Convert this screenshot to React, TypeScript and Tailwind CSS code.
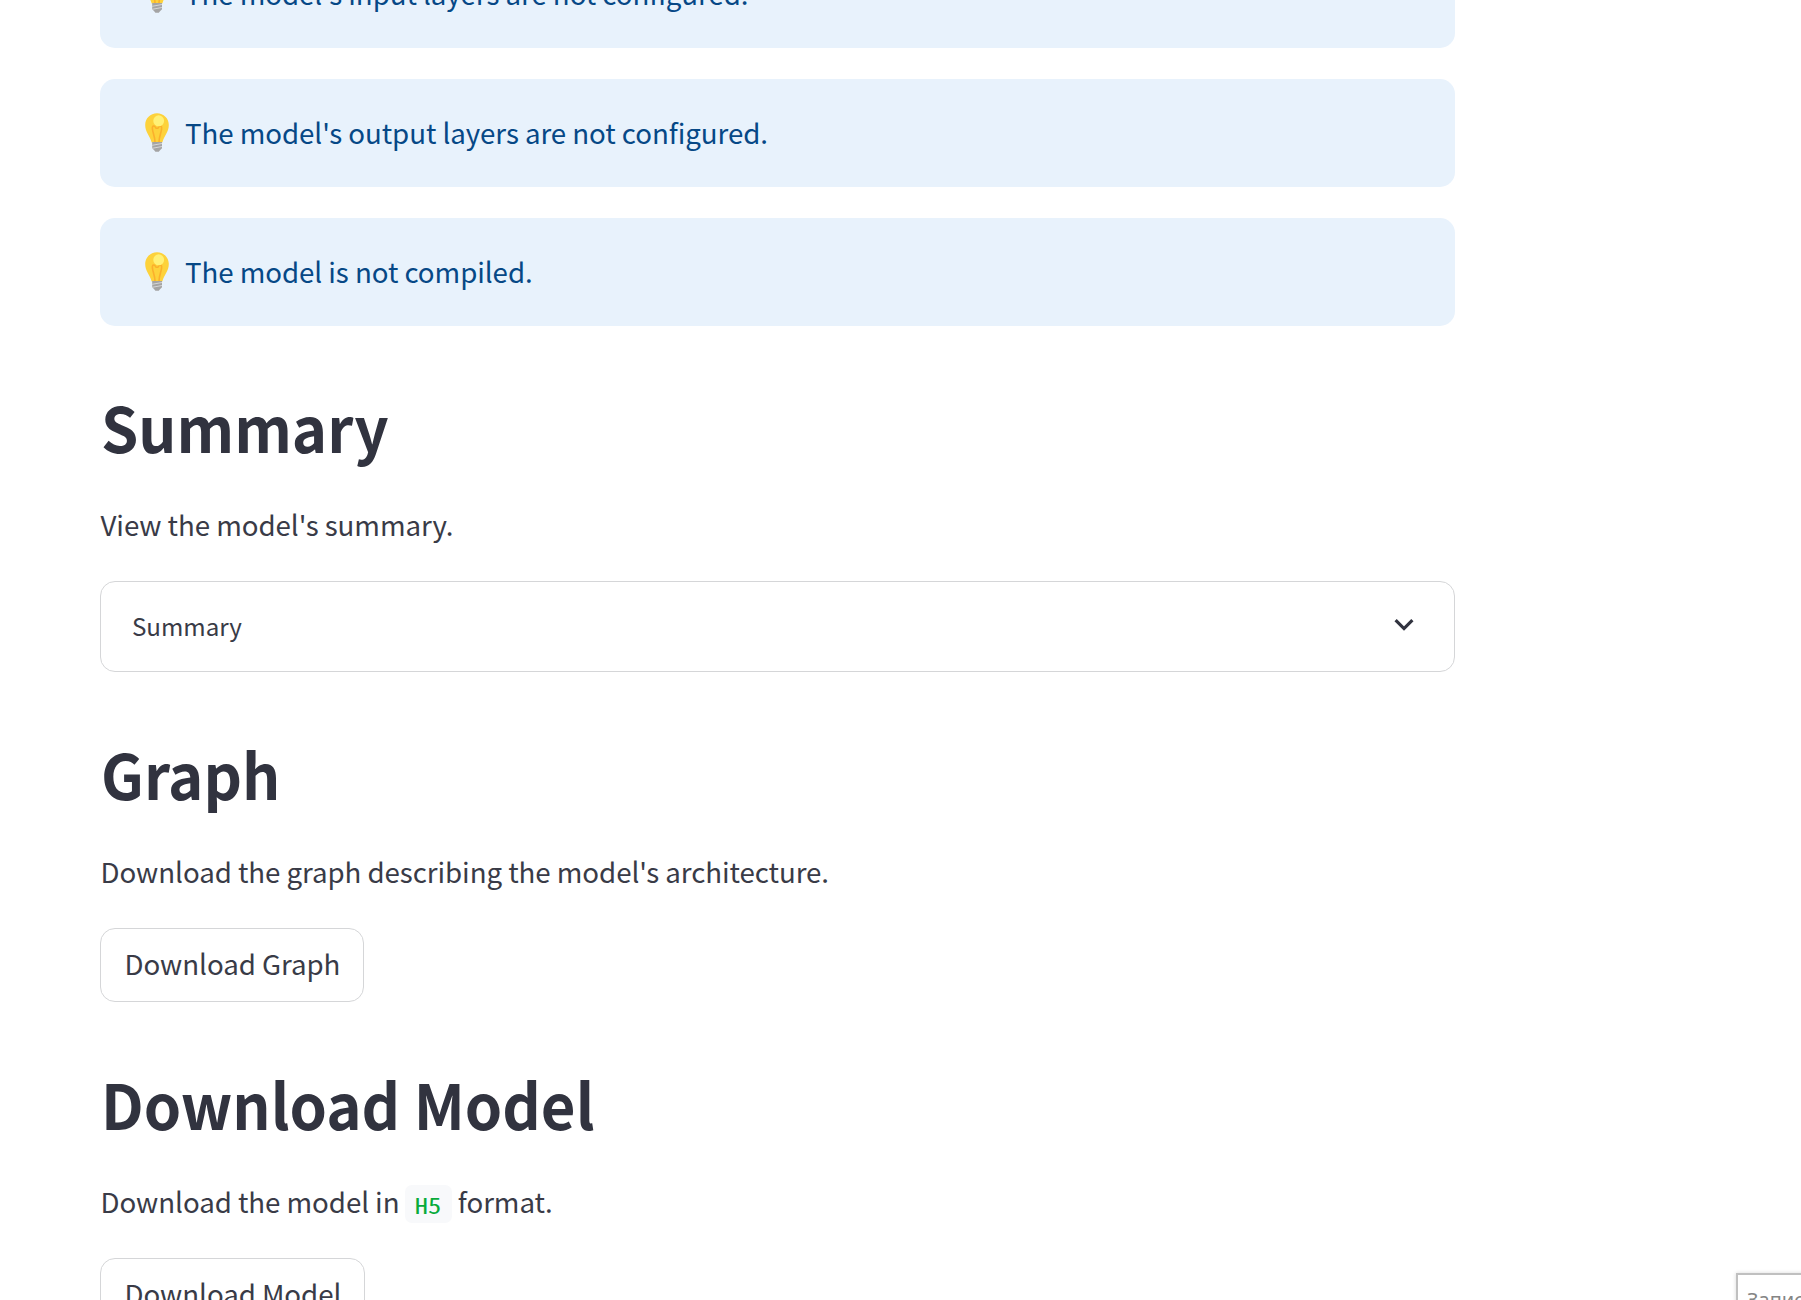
import React from "react";

function Bulb() {
  return (
    <svg viewBox="0 0 24 39" className="mr-[16px] h-[39px] w-6 shrink-0 -translate-y-[1px]">
      <path d="M12 .3C5.400.3.2 5.400.2 12c0 7 4.500 10.500 6.500 17.500h10.600c2-7 6.500-10.500 6.500-17.500C23.800 5.400 18.600.3 12 .3z" fill="#fdd23b" />
      <path d="M10 29c0-6-3.500-12-2.500-15 .6-1.600 2-1 3 .4 1 1.200 2 1.200 3 0 1-1.400 2.400-2 3-.4 1 3-2.500 9-2.500 15" fill="none" stroke="#fbb02c" strokeWidth="1.600" />
      <ellipse cx="13.700" cy="7.800" rx="5.400" ry="5.500" fill="#fff176" />
      <path d="M7.200 29h9.800v6.300l-2 2-1.200 1.400h-3.400L9.200 37.300l-2-2z" fill="#a4a4a4" />
      <path d="M7.200 32.300l9.800-1.800M7.200 35.300l9.800-1.800" stroke="#d6d6d6" strokeWidth="1" />
    </svg>
  );
}

function Alert({ children }: { children: string }) {
  return (
    <div className="flex h-[108px] w-full shrink-0 items-center rounded-[15px] bg-[#e8f2fc] pl-[45px] text-[#064886]">
      <Bulb />
      <span className="-translate-y-[1px] whitespace-nowrap">{children}</span>
    </div>
  );
}

function Heading({ children }: { children: string }) {
  return (
    <h2 className="h-[76px] shrink-0 origin-left scale-x-[0.955] pl-px text-[62.700px] leading-[76px] font-semibold tracking-normal whitespace-nowrap text-[#31333f]">
      {children}
    </h2>
  );
}

function Paragraph({ children }: { children: React.ReactNode }) {
  return <p className="mt-[35px] h-[50px] shrink-0 pl-[0.500px] whitespace-nowrap">{children}</p>;
}

function Button({ children }: { children: string }) {
  return (
    <button className="mt-8 flex h-[74px] shrink-0 items-center self-start rounded-[15px] border border-[#d5d6d8] pr-[23px] pb-[5px] pl-[23.500px] whitespace-nowrap">
      {children}
    </button>
  );
}

export default function App() {
  return (
    <div className="relative h-[1300px] w-full overflow-hidden bg-white font-['Noto_Sans_CJK_SC',sans-serif] text-[27.700px] leading-[50px] tracking-[-0.060px] text-[#393b47]">
      <main className="ml-[100px] flex w-[1355px] flex-col">
        <div className="-mt-[60px] mb-[62px] flex flex-col gap-[31px]">
          <Alert>The model's input layers are not configured.</Alert>
          <Alert>The model's output layers are not configured.</Alert>
          <Alert>The model is not compiled.</Alert>
        </div>

        <Heading>Summary</Heading>
        <Paragraph>View the model's summary.</Paragraph>
        <div className="mt-8 mb-[63px] flex h-[91px] shrink-0 items-center justify-between rounded-[15px] border border-[#d5d6d8] pr-[40px] pl-[31px]">
          <span className="-translate-y-[1px] text-[24.200px]">Summary</span>
          <svg viewBox="0 0 20 14" className="h-[14px] w-5 -translate-y-[2px]" fill="none" stroke="#31333f" strokeWidth="3.200">
            <path d="M1.600 2.200 10 10.600 18.400 2.200" />
          </svg>
        </div>

        <Heading>Graph</Heading>
        <Paragraph>Download the graph describing the model's architecture.</Paragraph>
        <div className="mb-[63px] flex flex-col">
          <Button>Download Graph</Button>
        </div>

        <Heading>Download Model</Heading>
        <Paragraph>
          Download the model in{" "}
          <code className="-ml-px inline-flex h-[38px] w-[47px] translate-y-[1px] items-center justify-center rounded-[7px] bg-[#f8f9fb] font-['Noto_Sans_Mono_CJK_SC','Noto_Sans_CJK_SC',monospace] text-[22px] leading-[38px] text-[#09ab3b]">
            <span className="inline-block -translate-y-[0.500px] scale-x-[1.200]">H5</span>
          </code>{" "}
          format.
        </Paragraph>
        <Button>Download Model</Button>
      </main>

      <div className="absolute top-[1273px] left-[1736px] h-[60px] w-[120px] border-2 border-[#c0c0c0] bg-white pt-[10px] pl-[9px] font-['Noto_Sans',sans-serif] text-[20px] leading-[30px] tracking-normal text-[#858585] shadow-[0_0_4px_rgba(0,0,0,0.15)]">
        Записать
      </div>
    </div>
  );
}
